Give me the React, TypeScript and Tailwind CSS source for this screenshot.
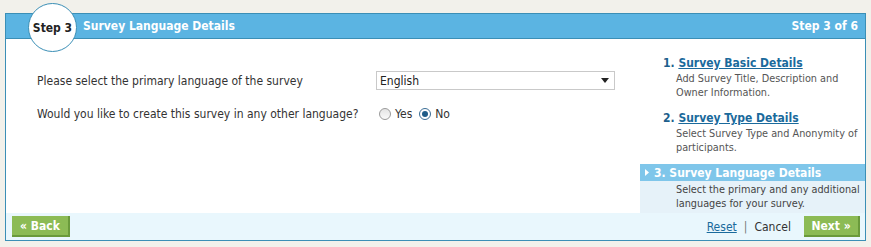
import React from 'react';

const font = { fontFamily: "'DejaVu Sans Condensed', 'DejaVu Sans', sans-serif" };

export default function App() {
  return (
    <div className="w-[871px] h-[247px] bg-[#f2f1eb] pt-[13px] pl-[5px] pr-[5px] text-[12px] text-[#333]" style={font}>
      <div className="relative w-[861px] h-[228px] border border-[#3b8fb6] bg-white flex flex-col">
        {/* Header */}
        <div className="shrink-0 h-[25px] bg-[#5bb4e2] border-b border-[#3b8fb6] flex items-center justify-between pl-[77px] pr-[7px] text-white font-bold text-[12px]">
          <span>Survey Language Details</span>
          <span>Step 3 of 6</span>
        </div>
        {/* Step badge */}
        <div className="absolute left-[22px] top-[-11px] w-[49px] h-[49px] rounded-full bg-white border border-[#3b8fb6] flex items-center justify-center font-bold text-[12px] text-[#222]">
          Step 3
        </div>

        {/* Body */}
        <div className="flex flex-1 min-h-0">
          <div className="flex-1 pl-[31px] pt-[32px]">
            <div className="flex items-center h-[19px]">
              <span className="w-[339px]">Please select the primary language of the survey</span>
              <div className="w-[239px] h-[19px] border border-[#c9c9c9] bg-white flex items-center justify-between pl-[3px] pr-[5px]">
                <span className="text-[#222]">English</span>
                <svg width="8" height="5" viewBox="0 0 8 5"><path d="M0 0h8L4 5z" fill="#222" /></svg>
              </div>
            </div>
            <div className="flex items-center h-[19px] mt-[14px]">
              <span className="w-[342px]">Would you like to create this survey in any other language?</span>
              <span className="w-[12px] h-[12px] rounded-full border border-[#9a9a9a] bg-gradient-to-b from-[#e4e4e4] to-[#fafafa]" />
              <span className="ml-[4px] mr-[7px]">Yes</span>
              <span className="w-[12px] h-[12px] rounded-full border border-[#3a6d96] bg-white flex items-center justify-center">
                <span className="w-[6px] h-[6px] rounded-full bg-[#1f5c88]" />
              </span>
              <span className="ml-[4px]">No</span>
            </div>
          </div>

          {/* Sidebar */}
          <div className="w-[225px] pt-[16px] flex flex-col">
            <div className="pl-[23px] pr-[4px]">
              <div className="font-bold text-[12px] leading-[16px] text-[#1d5f8c]">
                1. <span className="underline text-[#1a6a9c]">Survey Basic Details</span>
              </div>
              <div className="pl-[13px] text-[10.8px] text-[#555] leading-[14px] mt-[1px]">
                Add Survey Title, Description and Owner Information.
              </div>
            </div>
            <div className="pl-[23px] pr-[4px] mt-[10px]">
              <div className="font-bold text-[12px] leading-[16px] text-[#1d5f8c]">
                2. <span className="underline text-[#1a6a9c]">Survey Type Details</span>
              </div>
              <div className="pl-[13px] text-[10.8px] text-[#555] leading-[14px] mt-[1px]">
                Select Survey Type and Anonymity of participants.
              </div>
            </div>
            <div className="mt-[9px] flex-1 flex flex-col">
              <div className="h-[17px] bg-[#7fc6ea] flex items-center pl-[5px] font-bold text-[12px] text-white">
                <svg width="4" height="7" viewBox="0 0 4 7" className="mr-[5px]"><path d="M0 0l4 3.5L0 7z" fill="#fff" /></svg>
                3. Survey Language Details
              </div>
              <div className="flex-1 bg-[#e6f2f9] pl-[36px] pr-[2px] pt-[2px] text-[10.8px] text-[#444] leading-[14px]">
                Select the primary and any additional languages for your survey.
              </div>
            </div>
          </div>
        </div>

        {/* Footer */}
        <div className="shrink-0 h-[27px] bg-[#e9f7fd] flex items-center justify-between pl-[6px] pr-[5px]">
          <button className="h-[21px] w-[58px] bg-[#8cbb55] border-b-2 border-r-2 border-[#6a9a3b] text-white font-bold text-[12px] flex items-center justify-center">
            « Back
          </button>
          <div className="flex items-center">
            <span className="underline text-[#1a6a9c]">Reset</span>
            <span className="mx-[7px] text-[#777]">|</span>
            <span className="text-[#333]">Cancel</span>
            <button className="ml-[13px] h-[21px] w-[56px] bg-[#8cbb55] border-b-2 border-r-2 border-[#6a9a3b] text-white font-bold text-[12px] flex items-center justify-center">
              Next »
            </button>
          </div>
        </div>
      </div>
    </div>
  );
}
